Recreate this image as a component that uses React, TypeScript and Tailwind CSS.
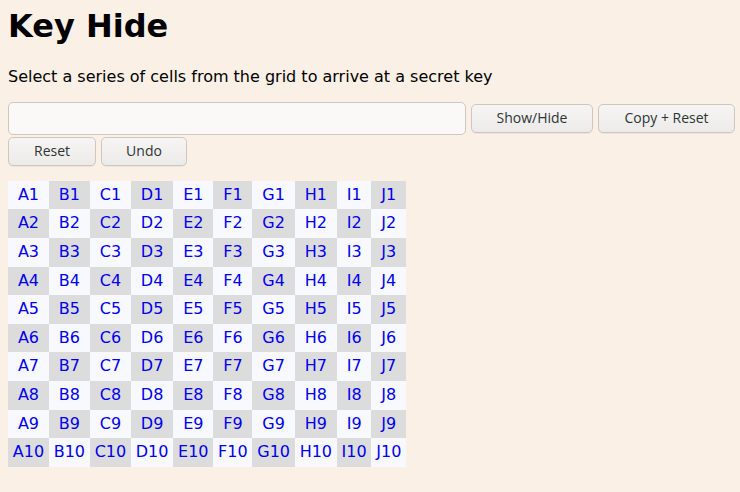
import React from "react";

const cols = ["A", "B", "C", "D", "E", "F", "G", "H", "I", "J"];
const rows = [1, 2, 3, 4, 5, 6, 7, 8, 9, 10];

function Btn({ label, w }: { label: string; w: string }) {
  return (
    <button
      className={`${w} shrink-0 h-[29px] rounded-[5px] border border-[#cdc7c2] bg-gradient-to-b from-[#f6f5f4] to-[#edebe9] text-[14px] text-[#2e3436] shadow-[0_1px_0_rgba(0,0,0,0.05)] font-['Open_Sans',sans-serif] leading-none`}
    >
      {label}
    </button>
  );
}

export default function App() {
  return (
    <div className="min-h-[492px] bg-[#faf0e6] p-[8px] font-['DejaVu_Sans',sans-serif] text-black">
      <h1 className="text-[32px] font-bold leading-[37.25px] mb-[21.5px]">Key Hide</h1>
      <p className="text-[16px] leading-[normal] mb-[16px]">
        Select a series of cells from the grid to arrive at a secret key
      </p>
      <div className="flex items-center">
        <input
          className="w-[458px] shrink-0 h-[33px] rounded-[5px] border border-[#cdc7c2] bg-[#faf9f8] outline-none"
          type="text"
        />
        <div className="ml-[5px] shrink-0">
          <Btn label="Show/Hide" w="w-[122px]" />
        </div>
        <div className="ml-[5px] shrink-0">
          <Btn label="Copy + Reset" w="w-[137px]" />
        </div>
      </div>
      <div className="flex mt-[2px] gap-[5px]">
        <Btn label="Reset" w="w-[88px]" />
        <Btn label="Undo" w="w-[86px]" />
      </div>
      <table className="mt-[15px] text-[16px] leading-[18.6px] text-[#0000ee]">
        <tbody>
          {rows.map((r, ri) => (
            <tr key={r}>
              {cols.map((c, ci) => (
                <td
                  key={c}
                  className={`py-[5px] px-[4.8px] text-center ${
                    (ri + ci) % 2 === 0 ? "bg-[#f8f8ff]" : "bg-[#dcdcdc]"
                  }`}
                >
                  {c}
                  {r}
                </td>
              ))}
            </tr>
          ))}
        </tbody>
      </table>
    </div>
  );
}
